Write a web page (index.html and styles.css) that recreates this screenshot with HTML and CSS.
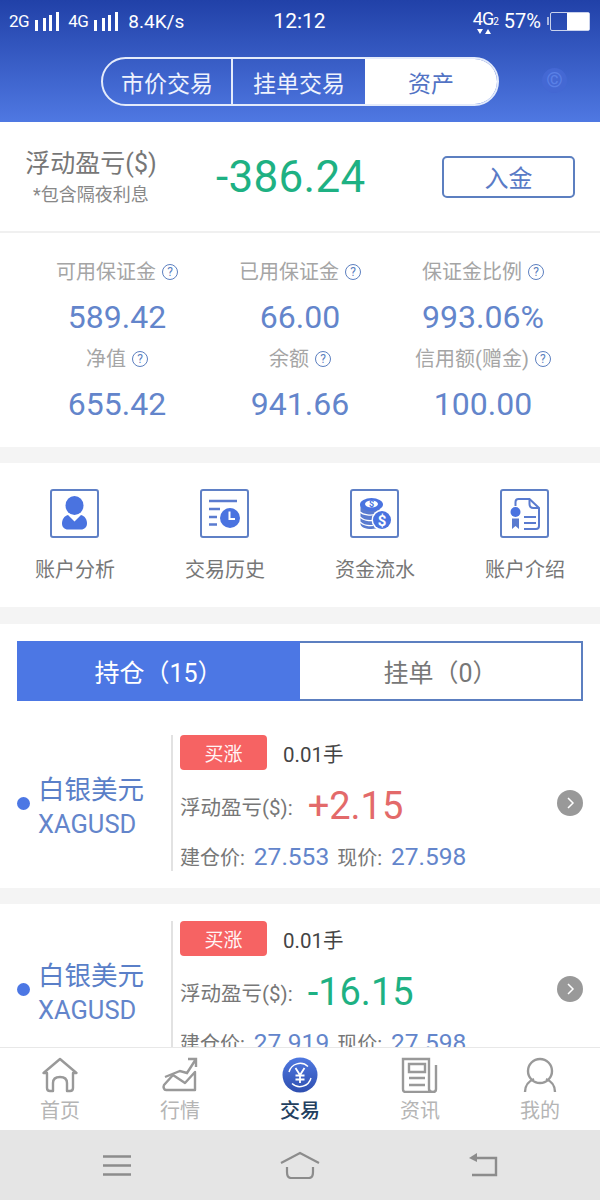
FILE: index.html
```html
<!DOCTYPE html>
<html>
<head>
    <meta charset="utf-8">
    <title>资产</title>
    <link rel="stylesheet" href="styles.css">
</head>
<body>
<div class="phone">
    <div class="header">
        <div class="status">
            <div class="status-left">
                <span class="net">2G</span>
                <svg class="bars" width="24" height="19" viewBox="0 0 24 19"><path d="M0 8h3v11H0zM8 6h3v13H8zM14 3h3v16h-3zM21 0h3v19h-3z" fill="#fff"/></svg>
                <span class="net net-second">4G</span>
                <svg class="bars" width="24" height="19" viewBox="0 0 24 19"><path d="M0 8h3v11H0zM8 6h3v13H8zM14 3h3v16h-3zM21 0h3v19h-3z" fill="#fff"/></svg>
                <span class="speed">8.4K/s</span>
            </div>
            <div class="clock">12:12</div>
            <div class="status-right">
                <span class="net-4g">4G<sub>2</sub><svg width="16" height="6" viewBox="0 0 16 6"><path d="M1 1h6L4 6zM9 6h6l-3-5z" fill="#fff"/></svg></span>
                <span class="battery-pct">57%</span>
                <span class="battery-tip"></span>
                <span class="battery"><span class="battery-fill"></span></span>
            </div>
        </div>
        <div class="seg-row">
            <div class="seg">
                <div class="seg-item seg-first">市价交易</div>
                <div class="seg-item seg-mid">挂单交易</div>
                <div class="seg-item seg-on">资产</div>
            </div>
            <div class="seg-c">©</div>
        </div>
    </div>

    <div class="scroll">
        <div class="summary">
            <div class="summary-label">
                <div class="summary-title">浮动盈亏($)</div>
                <div class="summary-note">*包含隔夜利息</div>
            </div>
            <div class="summary-value">-386.24</div>
            <div class="deposit">入金</div>
        </div>

        <div class="stats">
            <div class="stat">
                <div class="stat-label">可用保证金<span class="hint">?</span></div>
                <div class="stat-value">589.42</div>
            </div>
            <div class="stat">
                <div class="stat-label">已用保证金<span class="hint">?</span></div>
                <div class="stat-value">66.00</div>
            </div>
            <div class="stat">
                <div class="stat-label">保证金比例<span class="hint">?</span></div>
                <div class="stat-value">993.06%</div>
            </div>
            <div class="stat">
                <div class="stat-label">净值<span class="hint">?</span></div>
                <div class="stat-value">655.42</div>
            </div>
            <div class="stat">
                <div class="stat-label">余额<span class="hint">?</span></div>
                <div class="stat-value">941.66</div>
            </div>
            <div class="stat">
                <div class="stat-label">信用额(赠金)<span class="hint">?</span></div>
                <div class="stat-value">100.00</div>
            </div>
        </div>

        <div class="tools">
            <div class="tool">
                <div class="tool-icon">
                    <svg width="49" height="49" viewBox="0 0 49 49">
                        <ellipse cx="24.500" cy="16.500" rx="9" ry="9.500" fill="#4a73e0"/>
                        <path d="M18 26c-4 1-6 4.500-6 8.500 0 3.500 2.500 6 6 6h13c3.500 0 6-2.500 6-6 0-4-2-7.500-6-8.500l-6.500 6.500z" fill="#4a73e0"/>
                    </svg>
                </div>
                <div class="tool-name">账户分析</div>
            </div>
            <div class="tool">
                <div class="tool-icon">
                    <svg width="49" height="49" viewBox="0 0 49 49">
                        <path d="M9 12h28" stroke="#5a7bcf" stroke-width="2.500" fill="none"/>
                        <path d="M9 20h11M9 28h8M9 35.500h8" stroke="#5a7bcf" stroke-width="2.500" fill="none"/>
                        <circle cx="30" cy="29" r="10" fill="#4a73e0"/>
                        <path d="M29.500 22.500v7.500h5.500" stroke="#fff" stroke-width="2" fill="none"/>
                    </svg>
                </div>
                <div class="tool-name">交易历史</div>
            </div>
            <div class="tool">
                <div class="tool-icon">
                    <svg width="49" height="49" viewBox="0 0 49 49">
                        <path d="M10.500 16v19c0 3 5 5 11 5 3 0 6-1 8-2V16z" fill="#5a7bcf"/>
                        <path d="M10 23c3 3 11 4 17 2M10 28c3 3 9 4 13 3.500M10 33c3 3 9 4 13 3.500" stroke="#fff" stroke-width="1.200" fill="none"/>
                        <ellipse cx="21.500" cy="15.500" rx="11.500" ry="6.500" fill="#4a73e0"/>
                        <ellipse cx="21.500" cy="15" rx="6.500" ry="3.500" fill="#fff"/>
                        <text x="21.500" y="18" class="coin-small">$</text>
                        <circle cx="32" cy="31" r="10.500" fill="#fff"/>
                        <circle cx="32" cy="31" r="9" fill="#4a73e0"/>
                        <text x="32" y="36.500" class="coin-big">$</text>
                    </svg>
                </div>
                <div class="tool-name">资金流水</div>
            </div>
            <div class="tool">
                <div class="tool-icon">
                    <svg width="49" height="49" viewBox="0 0 49 49">
                        <path d="M15.500 17v-4c0-2 1-3 3-3h11l9.500 9v18c0 2-1 3-3 3H24" stroke="#5a7bcf" stroke-width="2" fill="none"/>
                        <path d="M29.500 10v5c0 3 1 4 4 4h5.500" stroke="#5a7bcf" stroke-width="2" fill="none"/>
                        <path d="M24 28h12M24 34h12" stroke="#5a7bcf" stroke-width="2" fill="none"/>
                        <circle cx="15.500" cy="23" r="5" fill="#4a73e0"/>
                        <path d="M12 29.500h7V40l-3.500-3-3.500 3z" fill="#5a7bcf"/>
                    </svg>
                </div>
                <div class="tool-name">账户介绍</div>
            </div>
        </div>

        <div class="orders">
            <div class="order-tabs">
                <div class="order-tab order-tab-on">持仓（15）</div>
                <div class="order-tab">挂单（0）</div>
            </div>

            <div class="position">
                <div class="pos-symbol">
                    <span class="pos-dot"></span>
                    <div class="pos-text">
                        <div class="pos-name">白银美元</div>
                        <div class="pos-code">XAGUSD</div>
                    </div>
                </div>
                <div class="pos-body">
                    <div class="pos-top"><span class="pos-tag">买涨</span><span class="pos-lots">0.01手</span></div>
                    <div class="pos-pl"><span class="pos-pl-label">浮动盈亏($):</span><span class="pos-pl-value pl-up">+2.15</span></div>
                    <div class="pos-prices">建仓价:<b>27.553</b>现价:<b>27.598</b></div>
                </div>
                <span class="pos-more"><svg width="10" height="14" viewBox="0 0 10 14"><path d="M3 2l5 5-5 5" stroke="#fff" stroke-width="1.500" fill="none"/></svg></span>
            </div>
        </div>

        <div class="position position-next">
            <div class="pos-symbol">
                <span class="pos-dot"></span>
                <div class="pos-text">
                    <div class="pos-name">白银美元</div>
                    <div class="pos-code">XAGUSD</div>
                </div>
            </div>
            <div class="pos-body">
                <div class="pos-top"><span class="pos-tag">买涨</span><span class="pos-lots">0.01手</span></div>
                <div class="pos-pl"><span class="pos-pl-label">浮动盈亏($):</span><span class="pos-pl-value pl-down">-16.15</span></div>
                <div class="pos-prices">建仓价:<b>27.919</b>现价:<b>27.598</b></div>
            </div>
            <span class="pos-more"><svg width="10" height="14" viewBox="0 0 10 14"><path d="M3 2l5 5-5 5" stroke="#fff" stroke-width="1.500" fill="none"/></svg></span>
        </div>
    </div>

    <div class="tabbar">
        <div class="tab">
            <svg width="38" height="36" viewBox="0 0 38 36"><path d="M2.500 16L19 2l16.500 14H32v15c0 2-1 3-3 3h-3v-8c0-4-3-6-7-6s-7 2-7 6v8H9c-2 0-3-1-3-3V16z" stroke="#999" stroke-width="2.400" fill="none" stroke-linejoin="round"/></svg>
            <div class="tab-name">首页</div>
        </div>
        <div class="tab">
            <svg width="38" height="36" viewBox="0 0 38 36"><path d="M4 20l15-6 7 2 9-14M27 2h8v8" stroke="#999" stroke-width="2.400" fill="none"/><path d="M3 28l9-10 12 8 10-11v18H5c-2 0-3-3-2-5z" stroke="#999" stroke-width="2.400" fill="none" stroke-linejoin="round"/></svg>
            <div class="tab-name">行情</div>
        </div>
        <div class="tab tab-on">
            <svg width="38" height="36" viewBox="0 0 38 36">
                <defs><linearGradient id="tradeFill" x1="0" y1="0" x2="0" y2="1"><stop offset="0" stop-color="#4f78e0"/><stop offset="1" stop-color="#2f4fb0"/></linearGradient></defs>
                <circle cx="19" cy="18" r="17.500" fill="url(#tradeFill)"/>
                <path d="M8 15a11.500 11.500 0 0 1 19-5.500M30 21a11.500 11.500 0 0 1-19 5.500" stroke="#fff" stroke-width="1.400" fill="none"/>
                <path d="M14.500 11l4.500 7 4.500-7M19 18v8M14.500 18.500h9M14.500 22.500h9" stroke="#fff" stroke-width="1.800" fill="none"/>
            </svg>
            <div class="tab-name">交易</div>
        </div>
        <div class="tab">
            <svg width="38" height="36" viewBox="0 0 38 36"><path d="M32 35H5c-2 0-3-1-3-3V2h26v30c0 2 2 3 4 3s3-1 3-3V8" stroke="#999" stroke-width="2.400" fill="none"/><path d="M8 7h16v8H8zM8 21h16M8 28h16" stroke="#999" stroke-width="2.400" fill="none"/></svg>
            <div class="tab-name">资讯</div>
        </div>
        <div class="tab">
            <svg width="38" height="36" viewBox="0 0 38 36"><circle cx="19" cy="14" r="12" stroke="#999" stroke-width="2.400" fill="none"/><path d="M4 35c0-7 4-11 9-13M34 35c0-7-4-11-9-13" stroke="#999" stroke-width="2.400" fill="none"/></svg>
            <div class="tab-name">我的</div>
        </div>
    </div>

    <div class="sysnav">
        <svg width="28" height="21" viewBox="0 0 28 21"><path d="M0 1.500h28M0 10.500h28M0 19.500h28" stroke="#8c8c8c" stroke-width="2.400"/></svg>
        <svg width="40" height="28" viewBox="0 0 40 28"><path d="M1 12L20 2l19 10" stroke="#8c8c8c" stroke-width="2.200" fill="none"/><path d="M7 16v5c0 4 1 6 4 6h18c3 0 4-2 4-6v-5" stroke="#8c8c8c" stroke-width="2.200" fill="none"/></svg>
        <svg width="30" height="24" viewBox="0 0 30 24"><path d="M8 5h20v17H4" stroke="#8c8c8c" stroke-width="2.400" fill="none"/><path d="M9 0v9L1 5z" fill="#8c8c8c"/></svg>
    </div>
</div>
</body>
</html>
```

FILE: styles.css
```css
* {
    box-sizing: border-box;
}
html, body {
    margin: 0;
    padding: 0;
}
body {
    font-family: Roboto, "Noto Sans CJK SC", sans-serif;
    background: #fff;
}
.phone {
    width: 600px;
    height: 1200px;
    display: flex;
    flex-direction: column;
    overflow: hidden;
}

/* header */
.header {
    height: 122px;
    flex: none;
    background: linear-gradient(#2141a8, #4f78e2);
    color: #fff;
}
.status {
    height: 43px;
    display: grid;
    grid-template-columns: 1fr auto 1fr;
    align-items: center;
    padding: 0 10px 1px 9px;
}
.status-left, .status-right {
    display: flex;
    align-items: center;
}
.status-right {
    justify-content: flex-end;
}
.net {
    font-size: 17px;
    letter-spacing: -0.5px;
    margin-right: 6px;
}
.net-second {
    margin-left: 9px;
}
.speed {
    font-size: 19px;
    margin-left: 10px;
}
.clock {
    font-size: 21px;
}
.net-4g {
    position: relative;
    font-size: 18px;
    letter-spacing: -1px;
    margin-right: 6px;
    padding-bottom: 6px;
}
.net-4g sub {
    font-size: 10px;
    vertical-align: 0;
}
.net-4g svg {
    position: absolute;
    left: 3px;
    bottom: 1px;
}
.battery-pct {
    font-size: 20px;
    margin-right: 6px;
}
.battery-tip {
    width: 2px;
    height: 8px;
    background: rgba(255, 255, 255, 0.6);
    margin-right: 1px;
}
.battery {
    width: 40px;
    height: 19px;
    border: 1px solid rgba(255, 255, 255, 0.75);
    border-radius: 2px;
    display: flex;
    justify-content: flex-end;
}
.battery-fill {
    width: 22px;
    background: #fff;
}
.seg-row {
    position: relative;
    display: flex;
    padding: 14px 0 0 101px;
}
.seg {
    width: 398px;
    height: 49px;
    display: flex;
    border: 2px solid #e4ebfb;
    border-radius: 25px;
    overflow: hidden;
}
.seg-item {
    display: flex;
    align-items: center;
    justify-content: center;
    font-size: 23px;
    color: #eef2fd;
}
.seg-first {
    width: 130px;
    border-right: 2px solid #e4ebfb;
}
.seg-mid {
    width: 132px;
}
.seg-on {
    flex: 1;
    background: #fff;
    color: #5273c4;
}
.seg-c {
    position: absolute;
    left: 542px;
    top: 25px;
    width: 25px;
    height: 25px;
    border-radius: 50%;
    background: #4468d3;
    color: #5a80e6;
    font-size: 21px;
    text-align: center;
    line-height: 25px;
}

/* scrolling content */
.scroll {
    flex: 1;
    min-height: 0;
    overflow: hidden;
    background: #f4f4f4;
}
.summary {
    height: 111px;
    background: #fff;
    border-bottom: 2px solid #f0f0f0;
    display: flex;
    align-items: center;
    padding: 0 25px;
}
.summary-label {
    width: 132px;
    padding-top: 4px;
    text-align: center;
}
.summary-title {
    font-size: 25px;
    line-height: 30px;
    color: #777;
}
.summary-note {
    margin-top: 2px;
    font-size: 18px;
    line-height: 28px;
    color: #888;
}
.summary-value {
    margin-left: 59px;
    width: 226px;
    font-size: 44px;
    letter-spacing: 0.3px;
    color: #1eb183;
}
.deposit {
    width: 133px;
    height: 42px;
    border: 2px solid #5c7fc0;
    border-radius: 5px;
    color: #5a7bc6;
    font-size: 24px;
    display: flex;
    align-items: center;
    justify-content: center;
}
.stats {
    height: 214px;
    background: #fff;
    display: grid;
    grid-template-columns: repeat(3, 183px);
    justify-content: center;
    grid-auto-rows: 87px;
    padding-top: 24px;
}
.stat {
    text-align: center;
}
.stat-label {
    font-size: 20px;
    line-height: 30px;
    color: #a5a5a5;
}
.hint {
    display: inline-block;
    width: 16px;
    height: 16px;
    margin-left: 6px;
    border: 1px solid #5c7fc0;
    border-radius: 50%;
    color: #5c7fc0;
    font-size: 12px;
    line-height: 14px;
    vertical-align: 3px;
}
.stat-value {
    margin-top: 10px;
    font-size: 32px;
    line-height: 41px;
    color: #6385cb;
}
.tools {
    height: 144px;
    margin-top: 16px;
    background: #fff;
    display: grid;
    grid-template-columns: repeat(4, 150px);
    padding-top: 26px;
}
.tool {
    text-align: center;
}
.tool-icon {
    width: 49px;
    height: 49px;
    margin-left: 50px;
    border: 2px solid #5f80c6;
    border-radius: 3px;
}
.tool-icon svg {
    display: block;
    margin: -2px;
}
.coin-small {
    font-size: 9px;
    fill: #4a73e0;
    text-anchor: middle;
    font-weight: 700;
}
.coin-big {
    font-size: 15px;
    fill: #fff;
    text-anchor: middle;
    font-weight: 700;
}
.tool-name {
    margin-top: 17px;
    font-size: 20px;
    line-height: 30px;
    color: #777;
}
.orders {
    margin-top: 17px;
    background: #fff;
    padding-top: 17px;
}
.order-tabs {
    height: 60px;
    margin: 0 17px;
    display: flex;
}
.order-tab {
    flex: 1;
    display: flex;
    align-items: center;
    justify-content: center;
    font-size: 25px;
    color: #777;
    border: 2px solid #5c7fc0;
    border-left: 0;
}
.order-tab-on {
    flex: 0 0 283px;
    background: #4c77e4;
    border: 0;
    color: #fff;
}
.position {
    height: 187px;
    background: #fff;
    display: flex;
    align-items: flex-start;
    padding: 34px 0 0 17px;
}
.position-next {
    height: 200px;
    margin-top: 16px;
    padding-top: 17px;
}
.pos-symbol {
    width: 156px;
    height: 136px;
    display: flex;
    align-items: center;
    border-right: 2px solid #e2e2e2;
}
.pos-dot {
    width: 13px;
    height: 13px;
    border-radius: 50%;
    background: #4c77e4;
    margin-right: 8px;
}
.pos-text {
    padding-top: 4px;
}
.pos-name {
    font-size: 26.500px;
    line-height: 38px;
    color: #5a7fc8;
}
.pos-code {
    font-size: 25.500px;
    line-height: 31px;
    color: #6385cb;
}
.pos-body {
    padding-left: 7px;
}
.pos-top {
    display: flex;
    align-items: center;
}
.pos-tag {
    width: 87px;
    height: 35px;
    background: #f66363;
    color: #fff5f5;
    border-radius: 4px;
    font-size: 19px;
    display: flex;
    align-items: center;
    justify-content: center;
}
.pos-lots {
    margin-left: 16px;
    font-size: 20.500px;
    color: #444;
}
.pos-pl {
    display: flex;
    align-items: center;
    height: 44px;
    margin-top: 14px;
}
.pos-pl-label {
    font-size: 20.500px;
    color: #777;
}
.pos-pl-value {
    margin-left: 15px;
    font-size: 38px;
}
.pl-up {
    color: #e36a6a;
}
.pl-down {
    color: #1eb183;
}
.pos-prices {
    margin-top: 14px;
    font-size: 20px;
    line-height: 30px;
    color: #777;
}
.pos-prices b {
    font-weight: 400;
    font-size: 24.500px;
    color: #6385cb;
    margin: 0 8px 0 9px;
}
.pos-more {
    flex: none;
    margin: 55px 17px 0 auto;
    width: 26px;
    height: 26px;
    border-radius: 50%;
    background: #999;
    display: flex;
    align-items: center;
    justify-content: center;
}

/* bottom bars */
.tabbar {
    height: 83px;
    flex: none;
    background: #fff;
    border-top: 1px solid #e8e8e8;
    display: grid;
    grid-template-columns: repeat(5, 120px);
}
.tab {
    text-align: center;
    padding-top: 9px;
}
.tab svg {
    display: block;
    margin: 0 auto 5px;
}
.tab-name {
    font-size: 20px;
    line-height: 26px;
    color: #b5b5b5;
}
.tab-on .tab-name {
    color: #23405f;
    font-weight: 500;
}
.sysnav {
    height: 70px;
    flex: none;
    background: #e5e5e5;
    display: grid;
    grid-template-columns: repeat(3, 183px);
    justify-content: center;
    justify-items: center;
    align-items: center;
}
.sysnav svg {
    display: block;
}
```
